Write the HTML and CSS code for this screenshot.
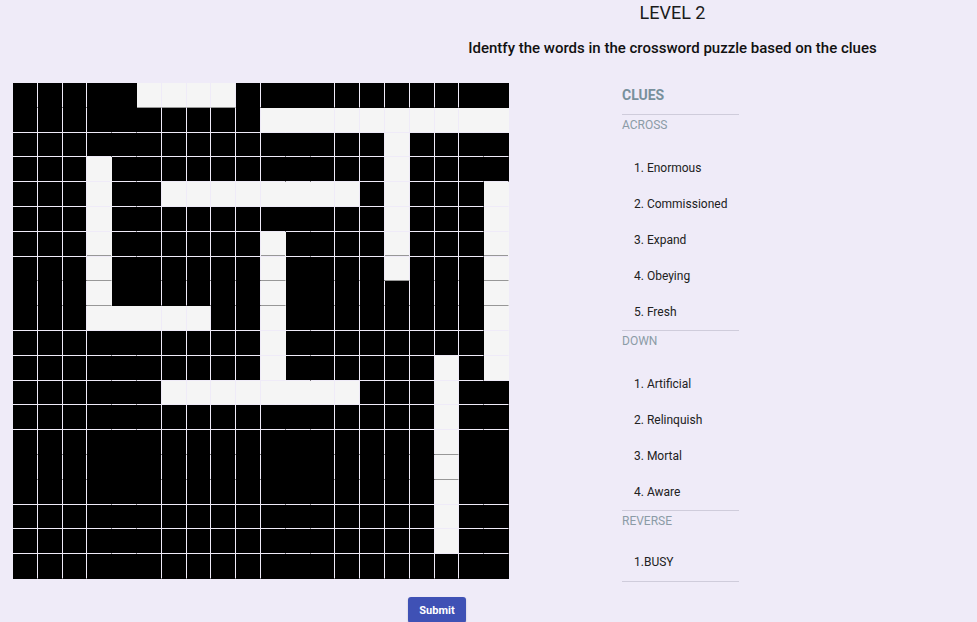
FILE: index.html
```html
<!DOCTYPE html>
<html lang="en">
<head>
<meta charset="utf-8">
<title>Crossword - Level 2</title>
<link rel="stylesheet" href="styles.css">
</head>
<body>
<header class="header">
  <h1 class="level">LEVEL 2</h1>
  <p class="subtitle">Identfy the words in the crossword puzzle based on the clues</p>
</header>
<main class="main">
  <div class="grid">
    <div class="row flat"><div class="cell"></div><div class="cell"></div><div class="cell"></div><div class="cell"></div><div class="cell"></div><div class="cell open line"></div><div class="cell open line"></div><div class="cell open line"></div><div class="cell open line"></div><div class="cell"></div><div class="cell"></div><div class="cell"></div><div class="cell"></div><div class="cell"></div><div class="cell"></div><div class="cell"></div><div class="cell"></div><div class="cell"></div><div class="cell"></div><div class="cell"></div></div>
    <div class="row"><div class="cell"></div><div class="cell"></div><div class="cell"></div><div class="cell"></div><div class="cell"></div><div class="cell"></div><div class="cell"></div><div class="cell"></div><div class="cell"></div><div class="cell"></div><div class="cell open"></div><div class="cell open"></div><div class="cell open"></div><div class="cell open"></div><div class="cell open"></div><div class="cell open"></div><div class="cell open"></div><div class="cell open"></div><div class="cell open"></div><div class="cell open"></div></div>
    <div class="row"><div class="cell"></div><div class="cell"></div><div class="cell"></div><div class="cell"></div><div class="cell"></div><div class="cell"></div><div class="cell"></div><div class="cell"></div><div class="cell"></div><div class="cell"></div><div class="cell"></div><div class="cell"></div><div class="cell"></div><div class="cell"></div><div class="cell"></div><div class="cell open"></div><div class="cell"></div><div class="cell"></div><div class="cell"></div><div class="cell"></div></div>
    <div class="row"><div class="cell"></div><div class="cell"></div><div class="cell"></div><div class="cell open"></div><div class="cell"></div><div class="cell"></div><div class="cell"></div><div class="cell"></div><div class="cell"></div><div class="cell"></div><div class="cell"></div><div class="cell"></div><div class="cell"></div><div class="cell"></div><div class="cell"></div><div class="cell open"></div><div class="cell"></div><div class="cell"></div><div class="cell"></div><div class="cell"></div></div>
    <div class="row"><div class="cell"></div><div class="cell"></div><div class="cell"></div><div class="cell open"></div><div class="cell"></div><div class="cell"></div><div class="cell open"></div><div class="cell open"></div><div class="cell open"></div><div class="cell open"></div><div class="cell open"></div><div class="cell open"></div><div class="cell open"></div><div class="cell open"></div><div class="cell"></div><div class="cell open"></div><div class="cell"></div><div class="cell"></div><div class="cell"></div><div class="cell open"></div></div>
    <div class="row"><div class="cell"></div><div class="cell"></div><div class="cell"></div><div class="cell open"></div><div class="cell"></div><div class="cell"></div><div class="cell"></div><div class="cell"></div><div class="cell"></div><div class="cell"></div><div class="cell"></div><div class="cell"></div><div class="cell"></div><div class="cell"></div><div class="cell"></div><div class="cell open"></div><div class="cell"></div><div class="cell"></div><div class="cell"></div><div class="cell open"></div></div>
    <div class="row"><div class="cell"></div><div class="cell"></div><div class="cell"></div><div class="cell open shade"></div><div class="cell"></div><div class="cell"></div><div class="cell"></div><div class="cell"></div><div class="cell"></div><div class="cell"></div><div class="cell open shade"></div><div class="cell"></div><div class="cell"></div><div class="cell"></div><div class="cell"></div><div class="cell open shade"></div><div class="cell"></div><div class="cell"></div><div class="cell"></div><div class="cell open shade"></div></div>
    <div class="row flat"><div class="cell"></div><div class="cell"></div><div class="cell"></div><div class="cell open line"></div><div class="cell"></div><div class="cell"></div><div class="cell"></div><div class="cell"></div><div class="cell"></div><div class="cell"></div><div class="cell open line"></div><div class="cell"></div><div class="cell"></div><div class="cell"></div><div class="cell"></div><div class="cell open line"></div><div class="cell"></div><div class="cell"></div><div class="cell"></div><div class="cell open line"></div></div>
    <div class="row flat"><div class="cell"></div><div class="cell"></div><div class="cell"></div><div class="cell open line"></div><div class="cell"></div><div class="cell"></div><div class="cell"></div><div class="cell"></div><div class="cell"></div><div class="cell"></div><div class="cell open line"></div><div class="cell"></div><div class="cell"></div><div class="cell"></div><div class="cell"></div><div class="cell"></div><div class="cell"></div><div class="cell"></div><div class="cell"></div><div class="cell open line"></div></div>
    <div class="row"><div class="cell"></div><div class="cell"></div><div class="cell"></div><div class="cell open"></div><div class="cell open"></div><div class="cell open"></div><div class="cell open"></div><div class="cell open"></div><div class="cell"></div><div class="cell"></div><div class="cell open"></div><div class="cell"></div><div class="cell"></div><div class="cell"></div><div class="cell"></div><div class="cell"></div><div class="cell"></div><div class="cell"></div><div class="cell"></div><div class="cell open"></div></div>
    <div class="row"><div class="cell"></div><div class="cell"></div><div class="cell"></div><div class="cell"></div><div class="cell"></div><div class="cell"></div><div class="cell"></div><div class="cell"></div><div class="cell"></div><div class="cell"></div><div class="cell open"></div><div class="cell"></div><div class="cell"></div><div class="cell"></div><div class="cell"></div><div class="cell"></div><div class="cell"></div><div class="cell"></div><div class="cell"></div><div class="cell open"></div></div>
    <div class="row"><div class="cell"></div><div class="cell"></div><div class="cell"></div><div class="cell"></div><div class="cell"></div><div class="cell"></div><div class="cell"></div><div class="cell"></div><div class="cell"></div><div class="cell"></div><div class="cell open"></div><div class="cell"></div><div class="cell"></div><div class="cell"></div><div class="cell"></div><div class="cell"></div><div class="cell"></div><div class="cell open"></div><div class="cell"></div><div class="cell open"></div></div>
    <div class="row"><div class="cell"></div><div class="cell"></div><div class="cell"></div><div class="cell"></div><div class="cell"></div><div class="cell"></div><div class="cell open"></div><div class="cell open"></div><div class="cell open"></div><div class="cell open"></div><div class="cell open"></div><div class="cell open"></div><div class="cell open"></div><div class="cell open"></div><div class="cell"></div><div class="cell"></div><div class="cell"></div><div class="cell open"></div><div class="cell"></div><div class="cell"></div></div>
    <div class="row"><div class="cell"></div><div class="cell"></div><div class="cell"></div><div class="cell"></div><div class="cell"></div><div class="cell"></div><div class="cell"></div><div class="cell"></div><div class="cell"></div><div class="cell"></div><div class="cell"></div><div class="cell"></div><div class="cell"></div><div class="cell"></div><div class="cell"></div><div class="cell"></div><div class="cell"></div><div class="cell open"></div><div class="cell"></div><div class="cell"></div></div>
    <div class="row flat"><div class="cell"></div><div class="cell"></div><div class="cell"></div><div class="cell"></div><div class="cell"></div><div class="cell"></div><div class="cell"></div><div class="cell"></div><div class="cell"></div><div class="cell"></div><div class="cell"></div><div class="cell"></div><div class="cell"></div><div class="cell"></div><div class="cell"></div><div class="cell"></div><div class="cell"></div><div class="cell open line"></div><div class="cell"></div><div class="cell"></div></div>
    <div class="row flat"><div class="cell"></div><div class="cell"></div><div class="cell"></div><div class="cell"></div><div class="cell"></div><div class="cell"></div><div class="cell"></div><div class="cell"></div><div class="cell"></div><div class="cell"></div><div class="cell"></div><div class="cell"></div><div class="cell"></div><div class="cell"></div><div class="cell"></div><div class="cell"></div><div class="cell"></div><div class="cell open line"></div><div class="cell"></div><div class="cell"></div></div>
    <div class="row"><div class="cell"></div><div class="cell"></div><div class="cell"></div><div class="cell"></div><div class="cell"></div><div class="cell"></div><div class="cell"></div><div class="cell"></div><div class="cell"></div><div class="cell"></div><div class="cell"></div><div class="cell"></div><div class="cell"></div><div class="cell"></div><div class="cell"></div><div class="cell"></div><div class="cell"></div><div class="cell open"></div><div class="cell"></div><div class="cell"></div></div>
    <div class="row"><div class="cell"></div><div class="cell"></div><div class="cell"></div><div class="cell"></div><div class="cell"></div><div class="cell"></div><div class="cell"></div><div class="cell"></div><div class="cell"></div><div class="cell"></div><div class="cell"></div><div class="cell"></div><div class="cell"></div><div class="cell"></div><div class="cell"></div><div class="cell"></div><div class="cell"></div><div class="cell open"></div><div class="cell"></div><div class="cell"></div></div>
    <div class="row"><div class="cell"></div><div class="cell"></div><div class="cell"></div><div class="cell"></div><div class="cell"></div><div class="cell"></div><div class="cell"></div><div class="cell"></div><div class="cell"></div><div class="cell"></div><div class="cell"></div><div class="cell"></div><div class="cell"></div><div class="cell"></div><div class="cell"></div><div class="cell"></div><div class="cell"></div><div class="cell open"></div><div class="cell"></div><div class="cell"></div></div>
    <div class="row"><div class="cell"></div><div class="cell"></div><div class="cell"></div><div class="cell"></div><div class="cell"></div><div class="cell"></div><div class="cell"></div><div class="cell"></div><div class="cell"></div><div class="cell"></div><div class="cell"></div><div class="cell"></div><div class="cell"></div><div class="cell"></div><div class="cell"></div><div class="cell"></div><div class="cell"></div><div class="cell"></div><div class="cell"></div><div class="cell"></div></div>
  </div>
  <aside class="clues">
    <h2 class="clues-title">CLUES</h2>
    <section class="clue-group">
      <h3 class="group-label">ACROSS</h3>
      <ul class="clue-list">
        <li class="clue">1. Enormous</li>
        <li class="clue">2. Commissioned</li>
        <li class="clue">3. Expand</li>
        <li class="clue">4. Obeying</li>
        <li class="clue">5. Fresh</li>
      </ul>
    </section>
    <section class="clue-group">
      <h3 class="group-label">DOWN</h3>
      <ul class="clue-list">
        <li class="clue">1. Artificial</li>
        <li class="clue">2. Relinquish</li>
        <li class="clue">3. Mortal</li>
        <li class="clue">4. Aware</li>
      </ul>
    </section>
    <section class="clue-group last">
      <h3 class="group-label">REVERSE</h3>
      <ul class="clue-list">
        <li class="clue">1.BUSY</li>
      </ul>
    </section>
  </aside>
</main>
<div class="actions">
  <button class="submit" type="button">Submit</button>
</div>
</body>
</html>
```

FILE: styles.css
```css
html, body {
  margin: 0;
  padding: 0;
  height: 100%;
  overflow: hidden;
}

body {
  background: #efebf8;
  font-family: Roboto, "Noto Sans", Arial, sans-serif;
  color: #212121;
}

.header {
  margin-left: 368px;
  width: 609px;
  text-align: center;
  padding-top: 2px;
}

.level {
  margin: 0;
  font-size: 18px;
  line-height: 21px;
  font-weight: 400;
  color: #1b1b1b;
}

.subtitle {
  margin: 16px 0 0;
  font-size: 15px;
  line-height: 18px;
  font-weight: 500;
  color: #111;
}

.main {
  display: flex;
  align-items: flex-start;
  padding-left: 13px;
  margin-top: 26px;
  height: 496px;
}

.grid {
  width: 496px;
  display: flex;
  flex-direction: column;
  flex: none;
}

.row {
  display: grid;
  grid-template-columns: repeat(20, 1fr);
  height: 24.8px;
}

.cell {
  box-sizing: border-box;
  background: #000;
  border-right: 1px solid #efebf8;
  border-bottom: 1px solid #efebf8;
}

.cell.open {
  background: #f5f5f5;
}

.row > .cell:nth-child(4),
.row > .cell:nth-child(5),
.row > .cell:nth-child(11),
.row > .cell:nth-child(12),
.row > .cell:nth-child(19),
.row > .cell:nth-child(20) {
  border-right-color: transparent;
}

.row.flat > .cell,
.row:last-child > .cell {
  border-bottom-color: transparent;
}

.row.flat > .cell.open.line {
  border-bottom-color: #979797;
}

.cell.open.shade {
  box-shadow: inset 0 -1px 0 #979797;
}

.clues {
  width: 117px;
  margin-left: 113px;
  padding-top: 4px;
}

.clues-title {
  margin: 0;
  font-size: 14px;
  line-height: 16px;
  font-weight: 700;
  color: #78909c;
  padding-bottom: 11px;
  border-bottom: 1px solid #cfccdb;
}

.clue-group {
  border-bottom: 1px solid #cfccdb;
}

.group-label {
  margin: 0;
  padding-top: 3px;
  font-size: 12px;
  line-height: 14px;
  font-weight: 400;
  color: #8b9ba6;
}

.clue-list {
  list-style: none;
  margin: 0;
  padding: 18px 0 0 12px;
}

.clue {
  font-size: 12px;
  line-height: 36px;
  height: 36px;
  color: #212121;
}

.clue-group.last .clue-list {
  padding-top: 16px;
  padding-bottom: 1px;
}

.actions {
  padding-left: 408px;
  margin-top: 18px;
}

.submit {
  width: 58px;
  height: 26px;
  background: #3f51b5;
  color: #fff;
  border: none;
  border-radius: 3px;
  font-family: Roboto, Arial, sans-serif;
  font-size: 11px;
  font-weight: 700;
  padding: 0;
  box-shadow: 0 1px 2px rgba(0, 0, 0, 0.2);
}
```
